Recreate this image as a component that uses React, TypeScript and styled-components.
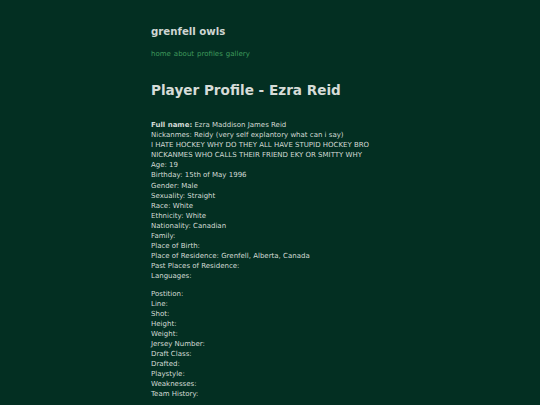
import React from "react";
import styled, { createGlobalStyle } from "styled-components";

const Global = createGlobalStyle`
  html, body { margin: 0; padding: 0; background: #032f22; }
  body { font-family: "DejaVu Sans", Verdana, sans-serif; }
`;

const Page = styled.div`
  padding: 25px 0 0 151px;
  color: #d3dbd6;
`;

const SiteTitle = styled.h1`
  margin: 0;
  font-size: 10.2px;
  font-weight: bold;
  line-height: 14px;
  color: #cfd6d2;
`;

const Nav = styled.nav`
  margin-top: 10px;
  display: flex;
  gap: 3px;
  font-size: 7px;
  line-height: 10px;
`;

const NavLink = styled.a`
  color: #3f9a5c;
  text-decoration: none;
`;

const Heading = styled.h2`
  margin: 21px 0 0;
  font-size: 13.6px;
  font-weight: bold;
  line-height: 20px;
  color: #d6dcd8;
`;

const Info = styled.div`
  margin-top: 20px;
  font-size: 7px;
  line-height: 10.1px;
`;

const Block = styled.p`
  margin: 0 0 7px;
`;

const Line = styled.div``;

const Label = styled.b``;

const first = [
  "Age: 19",
  "Birthday: 15th of May 1996",
  "Gender: Male",
  "Sexuality: Straight",
  "Race: White",
  "Ethnicity: White",
  "Nationality: Canadian",
  "Family:",
  "Place of Birth:",
  "Place of Residence: Grenfell, Alberta, Canada",
  "Past Places of Residence:",
  "Languages:",
];

const second = [
  "Postition:",
  "Line:",
  "Shot:",
  "Height:",
  "Weight:",
  "Jersey Number:",
  "Draft Class:",
  "Drafted:",
  "Playstyle:",
  "Weaknesses:",
  "Team History:",
];

export default function App() {
  return (
    <>
      <Global />
      <Page>
        <SiteTitle>grenfell owls</SiteTitle>
        <Nav>
          <NavLink href="#">home</NavLink>
          <NavLink href="#">about</NavLink>
          <NavLink href="#">profiles</NavLink>
          <NavLink href="#">gallery</NavLink>
        </Nav>
        <Heading>Player Profile - Ezra Reid</Heading>
        <Info>
          <Block>
            <Line>
              <Label>Full name:</Label> Ezra Maddison James Reid
            </Line>
            <Line>Nickanmes: Reidy (very self explantory what can i say)</Line>
            <Line>I HATE HOCKEY WHY DO THEY ALL HAVE STUPID HOCKEY BRO</Line>
            <Line>NICKANMES WHO CALLS THEIR FRIEND EKY OR SMITTY WHY</Line>
            {first.map((t) => (
              <Line key={t}>{t}</Line>
            ))}
          </Block>
          <Block>
            {second.map((t) => (
              <Line key={t}>{t}</Line>
            ))}
          </Block>
        </Info>
      </Page>
    </>
  );
}
